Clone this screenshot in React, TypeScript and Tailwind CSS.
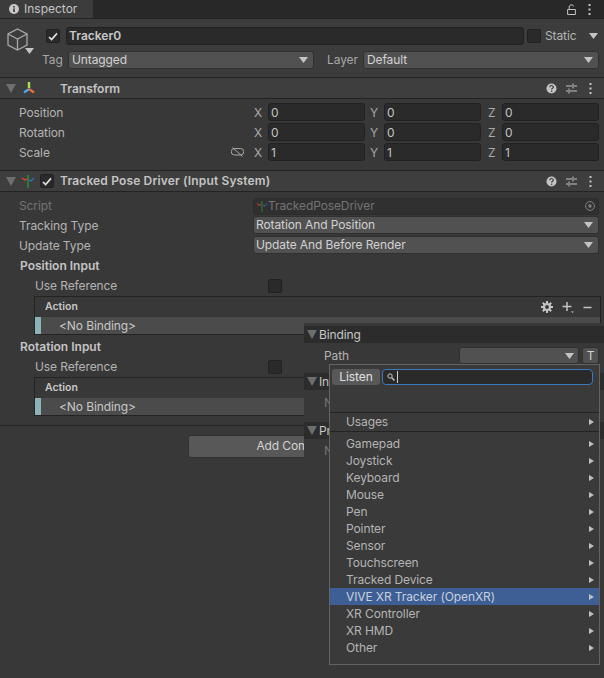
import { Fragment, type ReactNode } from "react";

const menuItems = [
  "Gamepad",
  "Joystick",
  "Keyboard",
  "Mouse",
  "Pen",
  "Pointer",
  "Sensor",
  "Touchscreen",
  "Tracked Device",
  "VIVE XR Tracker (OpenXR)",
  "XR Controller",
  "XR HMD",
  "Other",
];

function Caret({ className = "" }: { className?: string }) {
  return (
    <svg width="9" height="6" viewBox="0 0 9 6" className={className}>
      <path d="M0 0h9L4.5 6z" fill="#c4c4c4" />
    </svg>
  );
}

function Foldout() {
  return (
    <svg width="10" height="9" viewBox="0 0 10 9" className="shrink-0">
      <path d="M0 0h10L5 9z" fill="#6e6e6e" />
    </svg>
  );
}

function SubArrow() {
  return (
    <svg width="5" height="6" viewBox="0 0 5 6">
      <path d="M0 0l5 3-5 3z" fill="#c0c0c0" />
    </svg>
  );
}

function Check() {
  return (
    <svg width="10" height="9" viewBox="0 0 10 9">
      <path d="M1 5l2.6 2.6L9 1.4" fill="none" stroke="#e4e4e4" strokeWidth="1.6" />
    </svg>
  );
}

function Box({ children }: { children?: ReactNode }) {
  return (
    <div className="flex h-[14px] w-[14px] shrink-0 items-center justify-center rounded-[2px] border border-[#212121] bg-[#2a2a2a]">
      {children}
    </div>
  );
}

function HeaderIcons() {
  return (
    <div className="ml-auto flex items-center gap-[9px] pr-[12px]">
      <svg width="11" height="11" viewBox="0 0 11 11">
        <circle cx="5.5" cy="5.5" r="5" fill="#c4c4c4" />
        <path d="M3.8 4.2c0-2.2 3.5-2.2 3.5-.2 0 1.3-1.7 1.2-1.7 2.6" fill="none" stroke="#3e3e3e" strokeWidth="1.2" />
        <rect x="5" y="7.6" width="1.3" height="1.3" fill="#3e3e3e" />
      </svg>
      <svg width="11" height="11" viewBox="0 0 11 11">
        <path d="M0 3h6M8 3h3M7 .5v5M0 8h2M4 8h7M3 5.5v5" fill="none" stroke="#c4c4c4" strokeWidth="1" />
      </svg>
      <Dots />
    </div>
  );
}

function Dots() {
  return (
    <svg width="3" height="11" viewBox="0 0 3 11" className="ml-[3px]">
      <rect x="0.5" y="0" width="2" height="2" fill="#c4c4c4" />
      <rect x="0.5" y="4.5" width="2" height="2" fill="#c4c4c4" />
      <rect x="0.5" y="9" width="2" height="2" fill="#c4c4c4" />
    </svg>
  );
}

function AxisField({ axis, value }: { axis: string; value: string }) {
  return (
    <Fragment>
      <span className="w-[14px] shrink-0 pt-[1px] text-[#a8a8a8]">{axis}</span>
      <div className="flex h-[18px] w-[97px] shrink-0 items-center rounded-[3px] border border-[#212121] bg-[#2a2a2a] pl-[2px] pt-[1px] text-[#c4c4c4]">
        {value}
      </div>
    </Fragment>
  );
}

function VectorRow({ label, value, linked }: { label: string; value: string; linked?: boolean }) {
  return (
    <div className="flex h-[20px] items-center pl-[19px] pr-[5px]">
      <span className="pt-[1px] text-[#b4b4b4]">{label}</span>
      {linked && (
        <svg width="13" height="10" viewBox="0 0 13 10" className="ml-auto mr-[10px]">
          <path d="M3.5 1.5h6a3.2 3.2 0 010 6.5h-6a3.2 3.2 0 010-6.5zM1.5 .5l10 9" fill="none" stroke="#a8a8a8" strokeWidth="1" />
        </svg>
      )}
      <div className={`flex items-center ${linked ? "" : "ml-auto"}`}>
        <AxisField axis="X" value={value} />
        <span className="w-[5px]" />
        <AxisField axis="Y" value={value} />
        <span className="w-[7px]" />
        <AxisField axis="Z" value={value} />
      </div>
    </div>
  );
}

function Select({ value, className }: { value: string; className: string }) {
  return (
    <div className={`${className} flex h-[18px] items-center justify-between rounded-[3px] border border-[#303030] bg-[#515151] pr-[5px] text-[#d2d2d2]`}>
      <span>{value}</span>
      <Caret />
    </div>
  );
}

function SelectRow({ label, value }: { label: string; value: string }) {
  return (
    <div className="flex h-[20px] items-center pl-[19px] pr-[5px]">
      <span className="pt-[1px] text-[#b4b4b4]">{label}</span>
      <Select value={value} className="ml-auto w-[346px] pl-[2px]" />
    </div>
  );
}

function ActionBox({ tools }: { tools?: boolean }) {
  return (
    <div className="ml-[34px] mr-[3px] h-[39px] border border-[#232323]">
      <div className="flex h-[20px] items-center pl-[10px] pr-[8px] text-[10.5px] font-semibold tracking-normal text-[#c8c8c8]">
        <span className="pt-[1px]">Action</span>
        {tools && (
          <div className="ml-auto flex items-center gap-[9px]">
            <svg width="12" height="12" viewBox="0 0 12 12">
              <circle cx="6" cy="6" r="3" fill="none" stroke="#c4c4c4" strokeWidth="2.2" />
              <path d="M6 0v2.5M6 9.5V12M0 6h2.5M9.5 6H12M1.8 1.8l1.8 1.8M8.4 8.4l1.8 1.8M10.2 1.8L8.4 3.6M3.6 8.4l-1.8 1.8" stroke="#c4c4c4" strokeWidth="2" />
            </svg>
            <svg width="12" height="12" viewBox="0 0 12 12">
              <path d="M5 1v9M.5 5.5h9" stroke="#c4c4c4" strokeWidth="1.5" />
              <path d="M9 10.5h3l-1.5 1.5z" fill="#c4c4c4" />
            </svg>
            <svg width="9" height="9" viewBox="0 0 9 9">
              <path d="M.5 4.5h8" stroke="#c4c4c4" strokeWidth="1.5" />
            </svg>
          </div>
        )}
      </div>
      <div className="flex h-[17px] items-center bg-[#4b4b4b] text-[#c8c8c8]">
        <span className="h-full w-[6px] bg-[#8bb3b8]" />
        <span className="pl-[18px] pt-[1px]">{"<No Binding>"}</span>
      </div>
    </div>
  );
}

function InputSection({ title, tools }: { title: string; tools?: boolean }) {
  return (
    <div>
      <div className="flex h-[20px] items-center pl-[20px] font-semibold tracking-normal text-[#c4c4c4]">{title}</div>
      <div className="flex h-[20px] items-center pl-[35px] text-[#b4b4b4]">
        <span className="w-[233px]">Use Reference</span>
        <Box />
      </div>
      <ActionBox tools={tools} />
    </div>
  );
}

function Section({ title }: { title: string }) {
  return (
    <div className="flex h-[17px] items-center gap-[2px] bg-[#2c2c2c] pl-[3px] text-[#c8c8c8]">
      <Foldout />
      {title}
    </div>
  );
}

export default function App() {
  return (
    <div className="relative h-[678px] w-[604px] overflow-hidden bg-[#383838] font-['Inter',sans-serif] text-[12px] leading-none tracking-[-0.1px]">
      {/* tab strip */}
      <div className="flex h-[18px] items-center bg-[#282828]">
        <div className="flex h-full w-[93px] items-center gap-[5px] bg-[#3c3c3c] pl-[9px] tracking-normal text-[#c4c4c4]">
          <svg width="10" height="10" viewBox="0 0 10 10">
            <circle cx="5" cy="5" r="5" fill="#c8c8c8" />
            <rect x="4.2" y="2" width="1.6" height="1.6" fill="#3c3c3c" />
            <rect x="4.2" y="4.4" width="1.6" height="3.6" fill="#3c3c3c" />
          </svg>
          Inspector
        </div>
        <div className="ml-auto flex items-center gap-[9px] pr-[13px]">
          <svg width="9" height="11" viewBox="0 0 9 11">
            <path d="M1 5.5h7.4v5H.6v-5zM2.2 5V3C2.2.2 6.6.2 6.6 2.4" fill="none" stroke="#c4c4c4" strokeWidth="1" />
          </svg>
          <Dots />
        </div>
      </div>

      {/* object header */}
      <div className="h-[59px] border-t border-[#232323] bg-[#3c3c3c]">
        <div className="flex">
          <div className="relative ml-[7px] mt-[9px] h-[32px] w-[28px] shrink-0">
            <svg width="21" height="23" viewBox="0 0 21 23">
              <path d="M10.5 1L20 6v11l-9.5 5L1 17V6zM1 6l9.5 5L20 6M10.5 11v11" fill="none" stroke="#a8a8a8" strokeWidth="1.3" />
            </svg>
            <Caret className="absolute bottom-[6px] right-[1px]" />
          </div>
          <div className="flex-1 pt-[8px]">
            <div className="flex h-[18px] items-center">
              <span className="ml-[11px]">
                <Box>
                  <Check />
                </Box>
              </span>
              <div className="ml-[6px] flex h-[18px] w-[458px] items-center rounded-[3px] border border-[#212121] bg-[#2a2a2a] pl-[2px] font-semibold tracking-normal text-[#c8c8c8]">
                Tracker0
              </div>
              <span className="ml-[3px]">
                <Box />
              </span>
              <span className="ml-[4px] text-[#b4b4b4]">Static</span>
              <Caret className="ml-auto mr-[6px]" />
            </div>
            <div className="mt-[6px] flex h-[18px] items-center">
              <span className="ml-[7px] w-[26px] text-[#a8a8a8]">Tag</span>
              <Select value="Untagged" className="w-[246px] pl-[3px]" />
              <span className="ml-[13px] w-[36px] text-[#a8a8a8]">Layer</span>
              <Select value="Default" className="w-[236px] pl-[3px]" />
            </div>
          </div>
        </div>
      </div>

      {/* transform */}
      <div className="flex h-[22px] items-center border-y border-[#232323] bg-[#3e3e3e] pl-[6px] font-semibold tracking-normal text-[#c4c4c4]">
        <Foldout />
        <svg width="14" height="14" viewBox="0 0 14 14" className="ml-[6px]">
          <path d="M7 1v6" stroke="#a6e34c" strokeWidth="2.4" />
          <path d="M7 8L2 11.5" stroke="#4aa8e8" strokeWidth="2.4" />
          <path d="M7 8l5 3.5" stroke="#ef6a3a" strokeWidth="2.4" />
        </svg>
        <span className="ml-[24px] pt-[1px]">Transform</span>
        <HeaderIcons />
      </div>
      <div className="h-[71px] pt-[3px]">
        <VectorRow label="Position" value="0" />
        <VectorRow label="Rotation" value="0" />
        <VectorRow label="Scale" value="1" linked />
      </div>

      {/* tracked pose driver */}
      <div className="flex h-[22px] items-center border-y border-[#232323] bg-[#3e3e3e] pl-[6px] font-semibold text-[#c4c4c4]">
        <Foldout />
        <svg width="14" height="13" viewBox="0 0 14 13" className="ml-[5px]">
          <path d="M7 0v13" stroke="#1f9a2c" strokeWidth="1.4" />
          <path d="M1 3l3 2 2-1" fill="none" stroke="#e0432c" strokeWidth="1.4" />
          <path d="M8 5l2 1 3-3" fill="none" stroke="#2c6fc0" strokeWidth="1.4" />
        </svg>
        <span className="ml-[5px]">
          <Box>
            <Check />
          </Box>
        </span>
        <span className="ml-[6px] tracking-[0.15px]">Tracked Pose Driver (Input System)</span>
        <HeaderIcons />
      </div>
      <div className="flex h-[23px] items-center pl-[19px] pr-[5px] pt-[5px]">
        <span className="text-[#747474]">Script</span>
        <div className="ml-auto flex h-[17px] w-[346px] items-center rounded-[3px] border border-[#2c2c2c] bg-[#303030] pl-[2px] pr-[3px] text-[#747474]">
          <svg width="12" height="11" viewBox="0 0 14 13" className="opacity-70">
            <path d="M7 0v13" stroke="#1f9a2c" strokeWidth="1.4" />
            <path d="M1 3l3 2 2-1" fill="none" stroke="#e0432c" strokeWidth="1.4" />
            <path d="M8 5l2 1 3-3" fill="none" stroke="#2c6fc0" strokeWidth="1.4" />
          </svg>
          TrackedPoseDriver
          <svg width="10" height="10" viewBox="0 0 10 10" className="ml-auto">
            <circle cx="5" cy="5" r="4.4" fill="none" stroke="#808080" />
            <circle cx="5" cy="5" r="1.7" fill="#808080" />
          </svg>
        </div>
      </div>
      <SelectRow label="Tracking Type" value="Rotation And Position" />
      <SelectRow label="Update Type" value="Update And Before Render" />
      <div className="h-[1px]" />
      <InputSection title="Position Input" tools />
      <div className="h-[2px]" />
      <InputSection title="Rotation Input" />
      <div className="mt-[9px] h-[1px] bg-[#232323]" />
      <div className="flex justify-center pt-[9px]">
        <div className="flex h-[23px] w-[228px] items-center justify-center rounded-[3px] border border-[#303030] bg-[#585858] pb-[1px] text-[#d2d2d2]">
          Add Component
        </div>
      </div>

      {/* binding popup */}
      <div className="absolute left-[304px] top-[323px] h-[355px] w-[300px] bg-[#383838] pt-[3px] text-[#b4b4b4]">
        <Section title="Binding" />
        <div className="h-[30px] pl-[20px] pr-[5px] pt-[4px]">
          <div className="flex h-[17px] items-center">
            Path
            <div className="ml-auto flex h-[17px] w-[120px] items-center justify-end rounded-[3px] border border-[#303030] bg-[#515151] pr-[4px]">
              <Caret />
            </div>
            <div className="ml-[3px] flex h-[17px] w-[17px] items-center justify-center rounded-[3px] border border-[#303030] bg-[#515151] text-[#d2d2d2]">T</div>
          </div>
        </div>
        <Section title="Interactions" />
        <div className="flex h-[32px] items-center pb-[6px] pl-[20px] text-[#747474]">No Interactions</div>
        <Section title="Processors" />
        <div className="flex h-[24px] items-center pl-[20px] text-[#747474]">No Processors</div>
      </div>

      {/* control picker */}
      <div className="absolute left-[329px] top-[364px] h-[301px] w-[271px] border border-[#636363] bg-[#3a3a3a] text-[#b4b4b4]">
        <div className="flex h-[48px] items-start gap-[2px] border-b border-[#232323] pl-[2px] pt-[4px]">
          <div className="flex h-[16px] w-[48px] items-center justify-center rounded-[3px] bg-[#585858] text-[#e0e0e0]">Listen</div>
          <div className="flex h-[16px] w-[211px] items-center rounded-[4px] border border-[#3a79bb] bg-[#2a2a2a] pl-[4px]">
            <svg width="8" height="8" viewBox="0 0 8 8">
              <circle cx="3" cy="3" r="2.2" fill="none" stroke="#c4c4c4" />
              <path d="M4.8 4.8L7.5 7.5" stroke="#c4c4c4" strokeWidth="1.4" />
            </svg>
            <span className="ml-[2px] h-[12px] w-[1px] bg-[#d0d0d0]" />
          </div>
        </div>
        <div className="flex h-[19px] items-center justify-between border-b border-[#232323] pl-[16px] pr-[5px]">
          Usages
          <SubArrow />
        </div>
        <div className="pt-[3px]">
          {menuItems.map((item) => (
            <div
              key={item}
              className={`flex h-[17px] items-center justify-between pl-[16px] pr-[5px] ${
                item.startsWith("VIVE") ? "bg-[#3d5f96] text-[#c8d0dc]" : ""
              }`}
            >
              {item}
              <SubArrow />
            </div>
          ))}
        </div>
      </div>
    </div>
  );
}
